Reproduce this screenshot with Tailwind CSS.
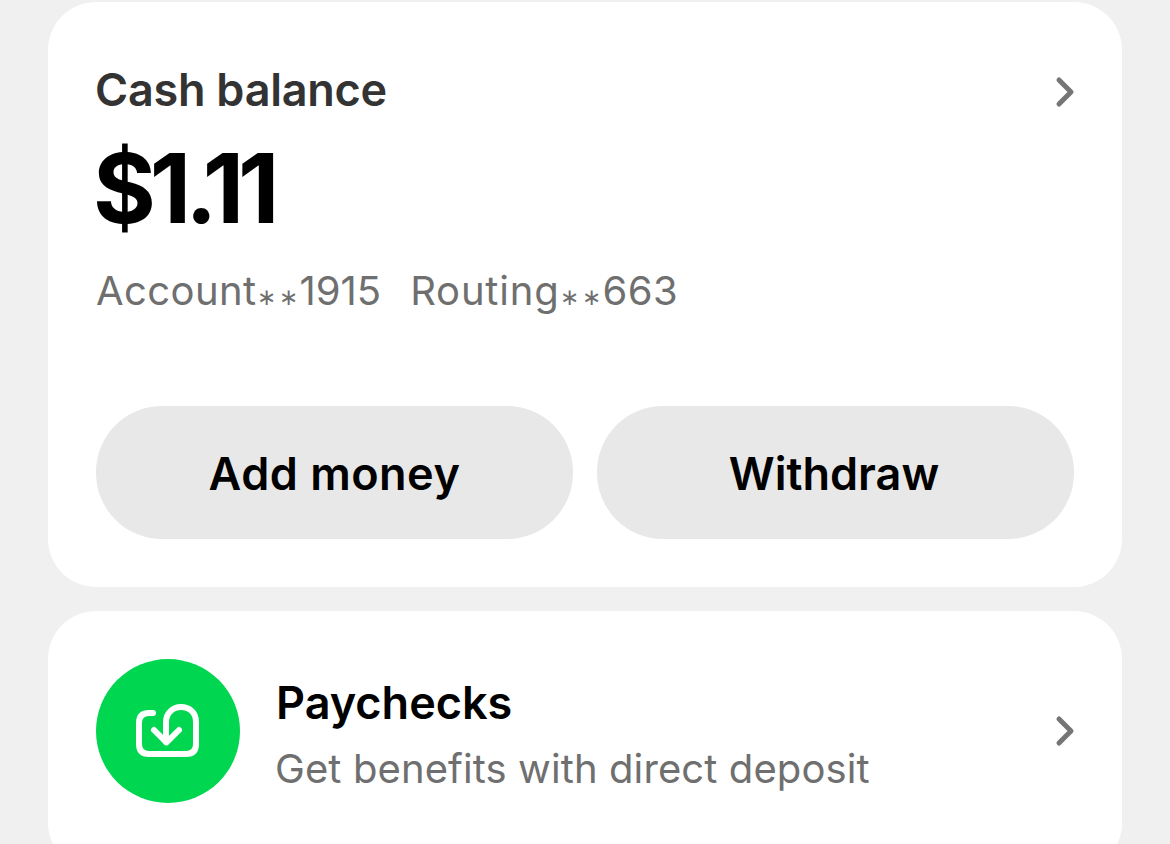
<!DOCTYPE html>
<html lang="en">
  <head>
    <meta charset="UTF-8" />
    <title>Cash balance</title>
    <script src="https://cdn.jsdelivr.net/npm/@tailwindcss/browser@4"></script>
  </head>
  <body class="h-[844px] overflow-hidden bg-[#f0f0f0] font-['Inter',sans-serif]">
    <main class="flex flex-col gap-6 px-12 pt-[2px]">
      <!-- Balance card -->
      <section class="h-[585px] rounded-[48px] bg-white px-12 pt-[58px]">
        <div class="flex items-center justify-between">
          <h2 class="ml-[-1px] text-[45px] leading-[60px] font-semibold tracking-[-0.25px] text-[#333333]">Cash balance</h2>
          <svg class="mt-[4px] mr-[-2px]" width="22" height="32" viewBox="0 0 22 32" fill="none" stroke="#757575" stroke-width="5" stroke-linecap="round" stroke-linejoin="round">
            <path d="M5 4 L17 16 L5 28" />
          </svg>
        </div>
        <p class="mt-[18px] ml-[-3px] text-[96px] leading-[100px] font-bold tracking-[-6px] text-black">$1.11</p>
        <div class="mt-[27px] flex gap-[29px] text-[40px] leading-[52px] text-[#6f6f6f]">
          <span class="tracking-[0.4px]">Account<span class="mr-[-2px] ml-[1px] text-[23px] tracking-[3px]">∗∗</span><span class="tracking-normal">1915</span></span>
          <span class="tracking-[0.8px]">Routing<span class="mr-[-2px] ml-[1px] text-[23px] tracking-[3px]">∗∗</span><span class="tracking-[0.4px]">663</span></span>
        </div>
        <div class="mt-[83px] grid grid-cols-2 gap-6">
          <button class="h-[133px] rounded-[66px] bg-[#e8e8e8] pt-[2px] text-[45px] font-semibold tracking-[0.5px] text-black">Add money</button>
          <button class="h-[133px] rounded-[66px] bg-[#e8e8e8] pt-[2px] pr-[3px] text-[45px] font-semibold text-black">Withdraw</button>
        </div>
      </section>

      <!-- Paychecks row -->
      <section class="flex h-[260px] items-start rounded-[48px] bg-white px-12 pt-12">
        <div class="flex h-36 w-36 shrink-0 items-center justify-center rounded-full bg-[#00d64f]">
          <svg width="64" height="54" viewBox="0 0 64 54" fill="none" stroke="white" stroke-width="6" stroke-linecap="round" stroke-linejoin="round">
            <path d="M17 9 H13 Q3 9 3 19 V40 Q3 50 13 50 H50 Q60 50 60 40 V18 C60 8 53 3 45 3 C37 3 30 9 30 18 V38" />
            <path d="M18 26 L30.500 38.500 L43 26" />
          </svg>
        </div>
        <div class="ml-9 pt-[14px]">
          <h3 class="text-[45px] leading-[60px] font-semibold text-black">Paychecks</h3>
          <p class="mt-[10px] ml-[-1px] text-[40px] leading-[52px] tracking-[0.1px] text-[#6f6f6f]">Get benefits with direct deposit</p>
        </div>
        <svg class="mt-[56px] mr-[-2px] ml-auto" width="22" height="32" viewBox="0 0 22 32" fill="none" stroke="#757575" stroke-width="5" stroke-linecap="round" stroke-linejoin="round">
          <path d="M5 4 L17 16 L5 28" />
        </svg>
      </section>
    </main>
  </body>
</html>
